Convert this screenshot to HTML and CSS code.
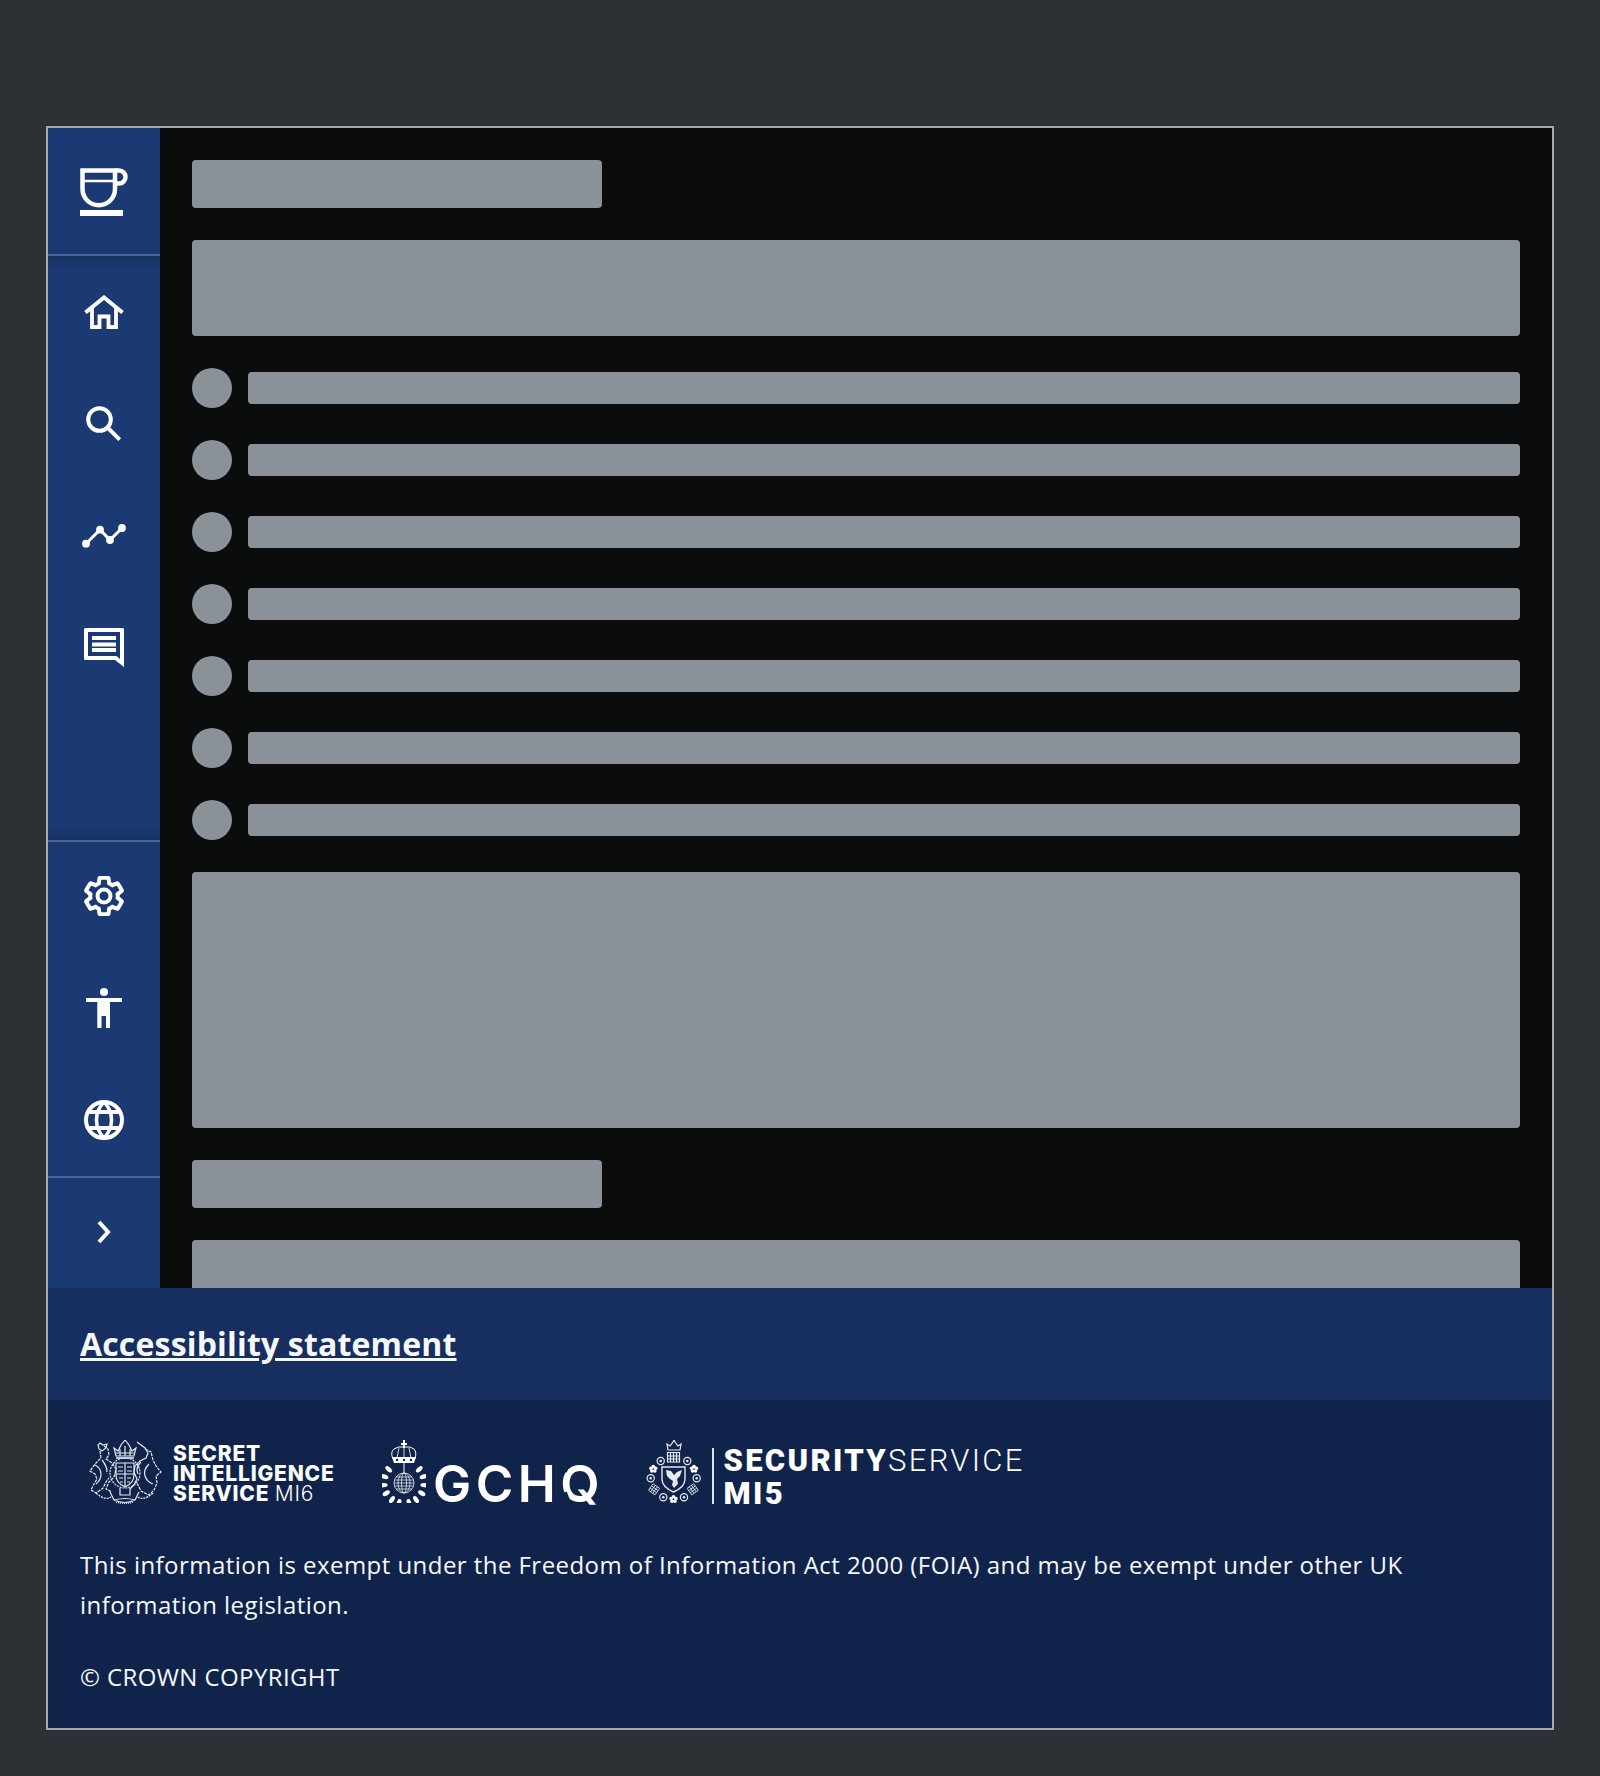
FILE: index.html
```html
<!DOCTYPE html>
<html lang="en">
<head>
    <meta charset="UTF-8">
    <meta name="viewport" content="width=device-width, initial-scale=1.0">
    <title>Loading</title>
    <link rel="stylesheet" href="styles.css">
</head>
<body>

    <div class="frame">
        <div class="app">
            <nav class="rail">
                <div class="rail-logo">
                    <svg width="48" height="48" viewBox="0 0 48 48" fill="none" stroke="#fff">
                        <path stroke-width="4.5" d="M2.5 2.5H35V21a16.25 16.25 0 0 1-32.5 0Z"/>
                        <path stroke-width="2.500" d="M4 13H34"/>
                        <path stroke-width="4.5" d="M35 2.5h4a6.5 6.5 0 0 1 0 13h-4"/>
                        <rect x="0" y="42" width="43" height="6" fill="#fff" stroke="none"/>
                    </svg>
                </div>
                <div class="rail-main">
                    <a class="rail-item">
                        <svg width="40" height="34" viewBox="0 0 40 34" fill="none" stroke="#fff" stroke-width="4">
                            <path d="M1.5 17.5 20 2.5l18.5 15"/>
                            <path stroke-width="3.8" d="M8 13v19h7.5V21.5h9V32H32V13"/>
                        </svg>
                    </a>
                    <a class="rail-item">
                        <svg width="36" height="36" viewBox="0 0 36 36" fill="none" stroke="#fff" stroke-width="4">
                            <circle cx="13.5" cy="13.5" r="11.3"/>
                            <path d="M22 22 33.7 33.7"/>
                        </svg>
                    </a>
                    <a class="rail-item">
                        <svg width="48" height="28" viewBox="0 0 48 28" fill="#fff" stroke="#fff" stroke-width="3">
                            <path fill="none" d="M6 21.7 20 7.7 30 18 42 6"/>
                            <circle cx="6" cy="21.7" r="2.4"/>
                            <circle cx="20" cy="7.7" r="2.4"/>
                            <circle cx="30" cy="18" r="2.4"/>
                            <circle cx="42" cy="6" r="2.4"/>
                        </svg>
                    </a>
                    <a class="rail-item">
                        <svg width="40" height="40" viewBox="0 0 40 40" fill="#fff">
                            <path fill-rule="evenodd" d="M1.5 0h37Q40 0 40 1.5V39L31 32H1.5Q0 32 0 30.5V1.5Q0 0 1.5 0ZM4 4V28H32.5L36 31V4Z"/>
                            <rect x="8" y="8" width="24" height="4"/>
                            <rect x="8" y="14.500" width="24" height="4"/>
                            <rect x="8" y="20" width="24" height="4"/>
                        </svg>
                    </a>
                </div>
                <a class="rail-item rail-line">
                    <svg width="40" height="40" viewBox="1.500 1.500 21 21" fill="none" stroke="#fff" stroke-width="2.100">
                        <path d="M19.14 12.94c.04-.3.06-.61.06-.94 0-.32-.02-.64-.07-.94l2.03-1.58c.18-.14.23-.41.12-.61l-1.92-3.32c-.12-.22-.37-.29-.59-.22l-2.39.96c-.5-.38-1.03-.7-1.62-.94l-.36-2.54c-.04-.24-.24-.41-.48-.41h-3.84c-.24 0-.43.17-.47.41l-.36 2.54c-.59.24-1.13.57-1.62.94l-2.39-.96c-.22-.08-.47 0-.59.22L2.74 8.87c-.12.21-.08.47.12.61l2.03 1.58c-.05.3-.09.63-.09.94s.02.64.07.94l-2.03 1.58c-.18.14-.23.41-.12.61l1.92 3.32c.12.22.37.29.59.22l2.39-.96c.5.38 1.03.7 1.62.94l.36 2.54c.05.24.24.41.48.41h3.84c.24 0 .44-.17.47-.41l.36-2.54c.59-.24 1.13-.56 1.62-.94l2.39.96c.22.08.47 0 .59-.22l1.92-3.32c.12-.22.07-.47-.12-.61l-2.01-1.58z"/>
                        <circle cx="12" cy="12" r="3.400"/>
                    </svg>
                </a>
                <a class="rail-item">
                    <svg width="36" height="40" viewBox="0 0 36 40" fill="#fbfcfc">
                        <circle cx="18" cy="4" r="4"/>
                        <rect x="0" y="10" width="36" height="4"/>
                        <path d="M11.300 14H24V40H20V28H15.500V40H11.300Z"/>
                    </svg>
                </a>
                <a class="rail-item">
                    <svg width="40" height="40" viewBox="0 0 40 40" fill="none" stroke="#fff">
                        <circle cx="20" cy="20" r="18" stroke-width="4"/>
                        <path stroke-width="3.500" d="M20 2C10 12 10 28 20 38 30 28 30 12 20 2Z"/>
                        <path stroke-width="4" d="M3 12H37M3 28H37"/>
                    </svg>
                </a>
                <a class="rail-item rail-line">
                    <svg width="16" height="24" viewBox="0 0 16 24" fill="none" stroke="#fff" stroke-width="4">
                        <path d="M3 2 12 12 3 22"/>
                    </svg>
                </a>
            </nav>

            <main class="content">
                <div class="block block-title"></div>
                <div class="block block-intro"></div>
                <div class="rows">
                    <div class="row"><span class="dot"></span><span class="bar"></span></div>
                    <div class="row"><span class="dot"></span><span class="bar"></span></div>
                    <div class="row"><span class="dot"></span><span class="bar"></span></div>
                    <div class="row"><span class="dot"></span><span class="bar"></span></div>
                    <div class="row"><span class="dot"></span><span class="bar"></span></div>
                    <div class="row"><span class="dot"></span><span class="bar"></span></div>
                    <div class="row"><span class="dot"></span><span class="bar"></span></div>
                </div>
                <div class="block block-large"></div>
                <div class="block block-title"></div>
                <div class="block block-intro"></div>
            </main>
        </div>

        <div class="statement">
            <a class="statement-link" href="#">Accessibility statement</a>
        </div>

        <footer class="footer">
            <div class="logos">
                <div class="logo logo-sis">
                    <svg class="crest" width="75" height="66" viewBox="0 0 75 66" fill="none" stroke="#e6e9ee" stroke-width="1.200">
                        <path d="M29 16 27 8l4 3 3-6 4-5 4 5 3 6 4-3-2 8Z"/>
                        <path d="M29 13H47M33 16V9M38 16V6M43 16V9"/>
                        <path stroke-width="1.600" d="M29 18H47"/>
                        <circle cx="38" cy="33" r="15" stroke-width="1.200" stroke-dasharray="2 1"/>
                        <path stroke-width="1.200" d="M29 23H47V35Q47 43 38 47 29 43 29 35Z"/>
                        <path d="M38 23V47M29 34H47M31 27 36 27M40 27 45 27M31 31H36M40 31H45M32 38H36M40 38H44M33 42H36M40 42H43"/>
                        <path stroke-dasharray="3 1" d="M17 6l4 3 1 6-3 4 6 4 4 6-2 8-5 5-3 7 6 3"/>
                        <path d="M13 3l3 2 4-1-1 4-4 3-3-2-1-4Z"/>
                        <path stroke-dasharray="3 1" d="M13 11l1 7-6 6-5 7 5 3 2 5-3 5-3 6 5 3 7-5 3-6 3-4"/>
                        <path d="M8 25Q14 28 14 34T9 44M15 20Q20 26 20 32"/>
                        <path d="M50 2l8 6 3 5-2 5-6 3-5 5-1 6 3 7-3 6-4 4"/>
                        <path stroke-dasharray="3 1" d="M58 9l6 3 2 8 3 6 5 6-5 4 1 7-3 7-5 5-8-4-3-6-3-4"/>
                        <path d="M62 24Q56 30 58 36T66 44M54 22Q48 28 51 34"/>
                        <path stroke-width="1.400" stroke-dasharray="2 1" d="M9 53Q18 61 24 57M66 53Q57 61 51 57"/>
                        <path stroke-width="1.200" d="M23 52 27 60Q38 65 48 60L52 52M27 60Q38 57 48 60M33 48V55H43V48"/>
                        <path stroke-dasharray="1 1" d="M29 62Q38 65 46 62"/>
                    </svg>
                    <div class="sis-name">
                        <span>SECRET</span>
                        <span>INTELLIGENCE</span>
                        <span>SERVICE <em>MI6</em></span>
                    </div>
                </div>

                <div class="logo logo-gchq">
                    <svg class="crest" width="44" height="63" viewBox="0 0 44 63" fill="#fff">
                        <defs>
                            <ellipse id="leaf" cx="22" cy="22.500" rx="2.200" ry="4"/>
                        </defs>
                        <path d="M21 0h2v3h2v2h-2v3h-2V5h-2V3h2Z"/>
                        <path d="M22 7q7-1 10 2t1 10H11Q8 12 12 9t10-2Z" fill="none" stroke="#fff" stroke-width="1"/>
                        <path d="M22 7V19M17 8 15 18M27 8 29 18" stroke="#fff" stroke-width=".8"/>
                        <path d="M10 17h24l-2 6H12Z"/>
                        <g fill="#10244b">
                            <circle cx="15" cy="20" r="1.200"/>
                            <circle cx="22" cy="20" r="1.200"/>
                            <circle cx="29" cy="20" r="1.200"/>
                        </g>
                        <rect x="21.500" y="23" width="1" height="10"/>
                        <g>
                            <use href="#leaf" transform="rotate(48 22 43)"/>
                            <use href="#leaf" transform="rotate(72 22 43)"/>
                            <use href="#leaf" transform="rotate(96 22 43)"/>
                            <use href="#leaf" transform="rotate(120 22 43)"/>
                            <use href="#leaf" transform="rotate(144 22 43)"/>
                            <use href="#leaf" transform="rotate(166 22 43)"/>
                            <use href="#leaf" transform="rotate(194 22 43)"/>
                            <use href="#leaf" transform="rotate(216 22 43)"/>
                            <use href="#leaf" transform="rotate(240 22 43)"/>
                            <use href="#leaf" transform="rotate(264 22 43)"/>
                            <use href="#leaf" transform="rotate(288 22 43)"/>
                            <use href="#leaf" transform="rotate(312 22 43)"/>
                        </g>
                        <g fill="none" stroke="#e6e9ee" stroke-width=".8">
                            <circle cx="22" cy="43" r="10"/>
                            <ellipse cx="22" cy="43" rx="6" ry="10"/>
                            <ellipse cx="22" cy="43" rx="2.500" ry="10"/>
                            <path d="M12.500 40H31.500M12 43H32M12.500 46H31.500M14 37H30M14 49H30"/>
                        </g>
                    </svg>
                    <span class="gchq-name">GCHQ</span>
                </div>

                <div class="logo logo-mi5">
                    <svg class="crest" width="56" height="64" viewBox="0 0 56 64" fill="none" stroke="#e6e9ee" stroke-width="1">
                        <defs>
                            <g id="rose">
                                <circle r="3.600" stroke-width="1.200"/>
                                <circle r="1.300" fill="#e6e9ee" stroke="none"/>
                            </g>
                            <g id="flower" fill="#fff" stroke="none">
                                <circle cx="0" cy="-2.500" r="1.800"/>
                                <circle cx="2.400" cy="-.8" r="1.800"/>
                                <circle cx="1.500" cy="2" r="1.800"/>
                                <circle cx="-1.500" cy="2" r="1.800"/>
                                <circle cx="-2.400" cy="-.8" r="1.800"/>
                            </g>
                            <path id="gate" d="M-4-4H4V4H-4ZM-4-1.300H4M-4 1.300H4M-1.300-4V4M1.300-4V4" stroke-width=".8"/>
                        </defs>
                        <path stroke-width="1.200" d="M22 10 21 4l3 2 3-4 1-2 1 2 3 4 3-2-1 6Z"/>
                        <path stroke-width="1.200" d="M21.500 12.500H33.500V22H21.500ZM21.500 16H33.500M21.500 19H33.500M24.500 12.500V22M27.500 12.500V22M30.500 12.500V22"/>
                        <use href="#rose" x="14.700" y="21"/>
                        <use href="#rose" x="41.300" y="21"/>
                        <use href="#flower" x="7.300" y="29"/>
                        <use href="#flower" x="48" y="29"/>
                        <use href="#rose" x="4.700" y="38.300"/>
                        <use href="#rose" x="50.700" y="38.300"/>
                        <use href="#gate" transform="translate(8 49.300) rotate(35)"/>
                        <use href="#gate" transform="translate(46.700 49.300) rotate(-35)"/>
                        <use href="#rose" x="17.300" y="57.300"/>
                        <use href="#rose" x="38" y="57.300"/>
                        <use href="#flower" x="27.500" y="59.300"/>
                        <path stroke-width="1.400" d="M16 27H39V39Q39 47 27.500 52 16 47 16 39Z"/>
                        <path fill="#e6e9ee" stroke="none" d="M20 30l5 1 3 4 3-3 5-2-2 6-3 3 1 5-4 4-2-3 1-4-3-2-3-3Z"/>
                    </svg>
                    <span class="mi5-rule"></span>
                    <div class="mi5-name">
                        <div><strong>SECURITY</strong>SERVICE</div>
                        <div><strong>MI5</strong></div>
                    </div>
                </div>
            </div>

            <p class="exempt">This information is exempt under the Freedom of Information Act 2000 (FOIA) and may be exempt under other UK information legislation.</p>
            <p class="copyright">© CROWN COPYRIGHT</p>
        </footer>
    </div>

</body>
</html>
```

FILE: styles.css
```css
body {
    margin: 0;
    height: 1776px;
    padding: 126px 46px 0;
    box-sizing: border-box;
    background-color: #2d3035;
    font-family: "Open Sans", "Noto Sans", sans-serif;
    color: #fff;
}

.frame {
    height: 1604px;
    box-sizing: border-box;
    border: 2px solid #a5a8ab;
    display: flex;
    flex-direction: column;
}

.app {
    height: 1160px;
    flex: none;
    display: flex;
    overflow: hidden;
    background-color: #0b0d0c;
}

/* left rail */
.rail {
    width: 112px;
    flex: none;
    display: flex;
    flex-direction: column;
    background-color: #1b3a73;
}

.rail-logo {
    height: 128px;
    flex: none;
    display: flex;
    align-items: center;
    justify-content: center;
    box-shadow: inset 0 -2px 0 #4a6696;
}

.rail-main {
    flex: 1;
    background: linear-gradient(#1a3263, #1b3a73 14px, #1b3a73 calc(100% - 14px), #1a3263);
}

.rail-item {
    height: 112px;
    flex: none;
    display: flex;
    align-items: center;
    justify-content: center;
}

.rail-line {
    box-shadow: inset 0 2px 0 #4a6696;
}

/* loading placeholders */
.content {
    flex: 1;
    min-width: 0;
    padding: 32px;
    display: flex;
    flex-direction: column;
    gap: 32px;
}

.block {
    flex: none;
    border-radius: 4px;
    background-color: #8b9199;
}

.block-title {
    width: 410px;
    height: 48px;
}

.block-intro {
    height: 96px;
}

.block-large {
    height: 256px;
}

.rows {
    display: flex;
    flex-direction: column;
    gap: 32px;
}

.row {
    height: 40px;
    display: flex;
    align-items: center;
    gap: 16px;
}

.dot {
    width: 40px;
    height: 40px;
    flex: none;
    border-radius: 50%;
    background-color: #8b9199;
}

.bar {
    flex: 1;
    height: 32px;
    border-radius: 4px;
    background-color: #8b9199;
}

/* footer */
.statement {
    height: 112px;
    flex: none;
    box-sizing: border-box;
    padding: 32px;
    background-color: #172f60;
}

.statement-link {
    font-size: 32px;
    font-weight: 700;
    line-height: 48px;
    letter-spacing: 0.17px;
    color: #f7f8fa;
}

.footer {
    flex: 1;
    padding: 32px 32px 31px;
    background-color: #10244b;
}

.logos {
    height: 81px;
    padding-left: 7px;
    display: flex;
    gap: 46px;
}

.logo {
    display: flex;
    margin-top: 8px;
}

.crest {
    flex: none;
}

.logo-sis {
    width: 249px;
}

.sis-name {
    margin: 4px 0 0 11px;
    font-family: Inter, sans-serif;
    font-size: 21px;
    font-weight: 800;
    line-height: 20px;
    letter-spacing: 0.8px;
    white-space: nowrap;
}

.sis-name span {
    display: block;
}

.sis-name em {
    font-style: normal;
    font-weight: 300;
}

.logo-gchq {
    width: 218px;
}

.gchq-name {
    position: relative;
    height: 60px;
    margin-left: 7px;
    padding-top: 14px;
    font-family: Inter, sans-serif;
    font-size: 51px;
    font-weight: 600;
    line-height: 60px;
    letter-spacing: 4.500px;
}

/* the two cuts in the ring of the Q */
.gchq-name::before,
.gchq-name::after {
    content: "";
    position: absolute;
    left: 131px;
    width: 5px;
    height: 12px;
    background-color: #10244b;
}

.gchq-name::before {
    top: 20px;
    transform: rotate(20deg);
}

.gchq-name::after {
    top: 52px;
    transform: rotate(-20deg);
}

.mi5-rule {
    width: 1.5px;
    height: 56px;
    margin: 8px 10px 0;
    background-color: #dfe4ec;
}

.mi5-name {
    margin-top: 4px;
    font-family: Roboto, sans-serif;
    font-size: 31px;
    font-weight: 300;
    line-height: 33px;
    letter-spacing: 2.300px;
}

.mi5-name strong {
    font-weight: 900;
}

.exempt {
    margin: 32px 0;
    font-size: 24px;
    font-weight: 500;
    line-height: 40px;
    letter-spacing: 0.45px;
    color: #f7f8fa;
}

.copyright {
    margin: 0;
    font-size: 24px;
    font-weight: 500;
    line-height: 40px;
    letter-spacing: 0.4px;
    color: #f7f8fa;
}
```
